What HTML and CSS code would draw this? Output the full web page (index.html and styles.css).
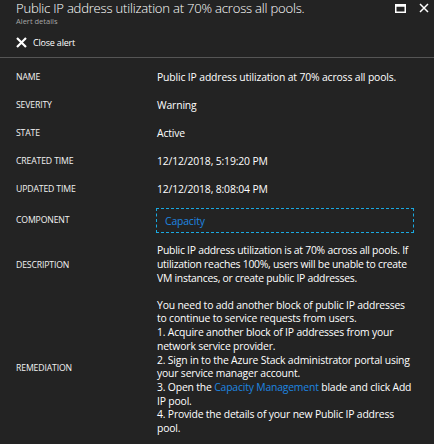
FILE: index.html
```html
<!DOCTYPE html>
<html>
<head>
<meta charset="utf-8">
<link rel="stylesheet" href="styles.css">
</head>
<body>
<div class="blade">
  <div class="header">
    <div class="titles">
      <div class="title">Public IP address utilization at 70% across all pools.</div>
      <div class="subtitle">Alert details</div>
    </div>
    <div class="win-icons">
      <svg class="ico-max" width="11" height="9" viewBox="0 0 11 9"><rect x="0.75" y="0.75" width="9.5" height="7.5" fill="none" stroke="#fff" stroke-width="1.5"/><rect x="0.75" y="0.75" width="9.5" height="2" fill="#fff"/></svg>
      <svg class="ico-close" width="10" height="10" viewBox="0 0 10 10"><path d="M1 1L9 9M9 1L1 9" stroke="#fff" stroke-width="1.5"/></svg>
    </div>
  </div>
  <div class="toolbar">
    <svg class="close-x" width="11" height="11" viewBox="0 0 11 11"><path d="M1 1L10 10M10 1L1 10" stroke="#fff" stroke-width="2.2"/></svg>
    <span class="close-text">Close alert</span>
  </div>
  <div class="details">
    <div class="label">NAME</div>
    <div class="value">Public IP address utilization at 70% across all pools.</div>
    <div class="label">SEVERITY</div>
    <div class="value">Warning</div>
    <div class="label">STATE</div>
    <div class="value">Active</div>
    <div class="label">CREATED TIME</div>
    <div class="value">12/12/2018, 5:19:20 PM</div>
    <div class="label">UPDATED TIME</div>
    <div class="value">12/12/2018, 8:08:04 PM</div>
    <div class="label">COMPONENT</div>
    <div class="value component"><span class="comp-box"><a class="link">Capacity</a></span></div>
    <div class="label">DESCRIPTION</div>
    <div class="value para desc">Public IP address utilization is at 70% across all pools. If utilization reaches 100%, users will be unable to create VM instances, or create public IP addresses.</div>
    <div class="label">REMEDIATION</div>
    <div class="value para remed">You need to add another block of public IP addresses to continue to service requests from users.<br>1. Acquire another block of IP addresses from your network service provider.<br>2. Sign in to the Azure Stack administrator portal using your service manager account.<br>3. Open the <a class="link">Capacity Management</a> blade and click Add IP pool.<br>4. Provide the details of your new Public IP address pool.</div>
  </div>
</div>
</body>
</html>
```
FILE: styles.css
```css
html, body {
  margin: 0;
  padding: 0;
  background: #232323;
}
body {
  font-family: "Open Sans", "Noto Sans", sans-serif;
  color: #ffffff;
  width: 434px;
  height: 444px;
  overflow: hidden;
}
.header {
  display: flex;
  justify-content: space-between;
  align-items: flex-start;
  padding: 0 5px 0 16px;
}
.title {
  font-size: 13.1px;
  font-weight: 300;
  line-height: 17px;
  letter-spacing: -0.22px;
}
.subtitle {
  font-size: 7.5px;
  line-height: 9px;
  color: #a6a6a6;
  margin-top: 0;
}
.win-icons {
  display: flex;
  align-items: center;
  gap: 13px;
  padding-top: 3px;
}
.ico-max { margin-top: 1px; }
.toolbar {
  display: flex;
  align-items: center;
  gap: 6px;
  height: 30px;
  padding: 1px 16px 0;
  border-bottom: 1px solid #555555;
}
.close-text {
  font-size: 9px;
  letter-spacing: -0.2px;
}
.details {
  display: grid;
  grid-template-columns: 141px 257px;
  padding: 5px 0 0 16px;
  align-items: center;
}
.label {
  font-size: 8.7px;
  letter-spacing: -0.15px;
  line-height: 14px;
  padding: 7px 0;
  color: #f2f2f2;
}
.value {
  font-size: 10.4px;
  line-height: 14px;
  padding: 7px 0;
  letter-spacing: -0.15px;
}
.value.component {
  padding: 5px 0 4px;
}
.comp-box {
  display: block;
  box-sizing: border-box;
  width: 258px;
  border: 1px dashed #1aa9e0;
  padding: 5px 8px 4px;
  line-height: 14px;
  margin-left: -1px;
}
.value.para {
  line-height: 13.9px;
  letter-spacing: -0.18px;
}
.value.desc {
  letter-spacing: -0.26px;
}
.value.remed {
  line-height: 13.7px;
  padding-top: 6px;
}
.link {
  color: #1e86e0;
}
```
